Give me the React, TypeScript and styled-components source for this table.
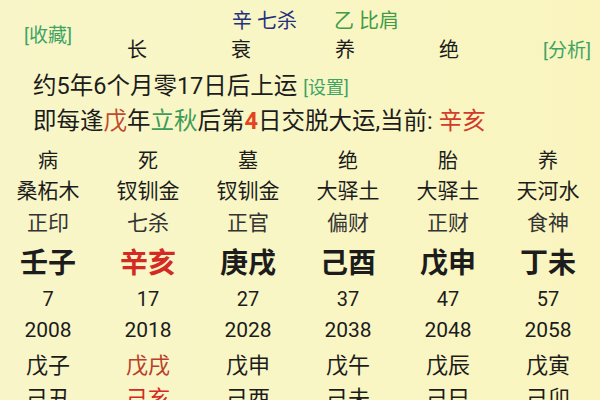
import React from "react";
import styled, { createGlobalStyle } from "styled-components";

const Global = createGlobalStyle`
  html, body { margin: 0; padding: 0; }
  body { background: #f9f6c6; }
`;

const Page = styled.div`
  width: 600px;
  height: 400px;
  overflow: hidden;
  background: linear-gradient(90deg, #f8f6c8 0%, #f9f6c4 60%, #faf5bf 100%);
  font-family: Roboto, "Noto Sans CJK SC", "Noto Sans", sans-serif;
  color: #1c1c1c;
  padding-top: 4px;
  box-sizing: border-box;
`;

const Header = styled.div`
  display: grid;
  grid-template-columns: 85px 416px 1fr;
  grid-template-rows: 30px 28px;
`;

const LinkText = styled.span<{ $size?: number }>`
  color: #3ea464;
  font-size: ${(p) => p.$size ?? 19}px;
  white-space: nowrap;
`;

const SideCell = styled.div<{ $end?: boolean }>`
  display: flex;
  align-items: center;
  justify-content: ${(p) => (p.$end ? "flex-end" : "flex-start")};
  padding: ${(p) => (p.$end ? "0 9px 0 0" : "0 0 0 24px")};
  grid-row: ${(p) => (p.$end ? "2" : "1 / span 2")};
  grid-column: ${(p) => (p.$end ? "3" : "1")};
`;

const TopLine = styled.div`
  grid-row: 1;
  grid-column: 2;
  display: flex;
  align-items: center;
  gap: 37px;
  padding-left: 147px;
  font-size: 20px;
  white-space: nowrap;
`;

const Ten = styled.span<{ $tone: "navy" | "green" }>`
  color: ${(p) => (p.$tone === "navy" ? "#24307e" : "#409c46")};
`;

const StageRow = styled.div`
  grid-row: 2;
  grid-column: 2;
  display: grid;
  grid-template-columns: repeat(4, 104px);
  align-items: center;
  font-size: 20px;
`;

const StageCell = styled.div`
  text-align: center;
`;

const InfoLine = styled.div<{ $first?: boolean }>`
  height: 35px;
  line-height: 35px;
  padding-left: 33px;
  font-size: 23.5px;
  white-space: nowrap;
  margin-top: ${(p) => (p.$first ? "7px" : "0")};
`;

const Mark = styled.span<{ $tone: "brown" | "green" | "red" | "num" }>`
  color: ${(p) =>
    p.$tone === "brown"
      ? "#c04a30"
      : p.$tone === "green"
      ? "#3e9c58"
      : p.$tone === "num"
      ? "#e4431f"
      : "#d23a2a"};
  font-weight: ${(p) => (p.$tone === "num" ? 700 : 400)};
`;

const Table = styled.div`
  display: grid;
  grid-template-columns: repeat(6, 100px);
  grid-template-rows: 29px 29px 35px 45px 31px 31px 35px 31px;
  grid-auto-flow: column;
  margin: 6px 0 0 -2px;
`;

type Kind = "stage" | "nayin" | "god" | "pillar" | "age" | "year" | "flow" | "flow2";

const sizes: Record<Kind, number> = {
  stage: 20,
  nayin: 21,
  god: 21,
  pillar: 28,
  age: 20,
  year: 21,
  flow: 22,
  flow2: 22,
};

const Cell = styled.div<{ $kind: Kind; $tone?: "red" | "brown" }>`
  display: flex;
  align-items: center;
  justify-content: center;
  white-space: nowrap;
  font-size: ${(p) => sizes[p.$kind]}px;
  font-weight: ${(p) => (p.$kind === "pillar" ? 700 : 400)};
  color: ${(p) =>
    p.$tone === "red"
      ? "#d42a24"
      : p.$tone === "brown"
      ? "#b8402c"
      : p.$kind === "god"
      ? "#333"
      : "#1c1c1c"};
`;

const columns = [
  { stage: "病", nayin: "桑柘木", god: "正印", pillar: "壬子", age: "7", year: "2008", flow: "戊子", flow2: "己丑" },
  { stage: "死", nayin: "钗钏金", god: "七杀", pillar: "辛亥", age: "17", year: "2018", flow: "戊戌", flow2: "己亥", current: true },
  { stage: "墓", nayin: "钗钏金", god: "正官", pillar: "庚戌", age: "27", year: "2028", flow: "戊申", flow2: "己酉" },
  { stage: "绝", nayin: "大驿土", god: "偏财", pillar: "己酉", age: "37", year: "2038", flow: "戊午", flow2: "己未" },
  { stage: "胎", nayin: "大驿土", god: "正财", pillar: "戊申", age: "47", year: "2048", flow: "戊辰", flow2: "己巳" },
  { stage: "养", nayin: "天河水", god: "食神", pillar: "丁未", age: "57", year: "2058", flow: "戊寅", flow2: "己卯" },
];

export default function App() {
  return (
    <>
      <Global />
      <Page>
        <Header>
          <SideCell>
            <LinkText>[收藏]</LinkText>
          </SideCell>
          <TopLine>
            <Ten $tone="navy">辛 七杀</Ten>
            <Ten $tone="green">乙 比肩</Ten>
          </TopLine>
          <StageRow>
            {["长", "衰", "养", "绝"].map((s, i) => (
              <StageCell key={i}>{s}</StageCell>
            ))}
          </StageRow>
          <SideCell $end>
            <LinkText>[分析]</LinkText>
          </SideCell>
        </Header>
        <InfoLine $first>
          约5年6个月零17日后上运 <LinkText $size={18}>[设置]</LinkText>
        </InfoLine>
        <InfoLine>
          即每逢<Mark $tone="brown">戊</Mark>年<Mark $tone="green">立秋</Mark>后第
          <Mark $tone="num">4</Mark>日交脱大运,当前: <Mark $tone="red">辛亥</Mark>
        </InfoLine>
        <Table>
          {columns.map((c, i) => (
            <React.Fragment key={i}>
              <Cell $kind="stage">{c.stage}</Cell>
              <Cell $kind="nayin">{c.nayin}</Cell>
              <Cell $kind="god">{c.god}</Cell>
              <Cell $kind="pillar" $tone={c.current ? "red" : undefined}>{c.pillar}</Cell>
              <Cell $kind="age">{c.age}</Cell>
              <Cell $kind="year">{c.year}</Cell>
              <Cell $kind="flow" $tone={c.current ? "brown" : undefined}>{c.flow}</Cell>
              <Cell $kind="flow2" $tone={c.current ? "red" : undefined}>{c.flow2}</Cell>
            </React.Fragment>
          ))}
        </Table>
      </Page>
    </>
  );
}
